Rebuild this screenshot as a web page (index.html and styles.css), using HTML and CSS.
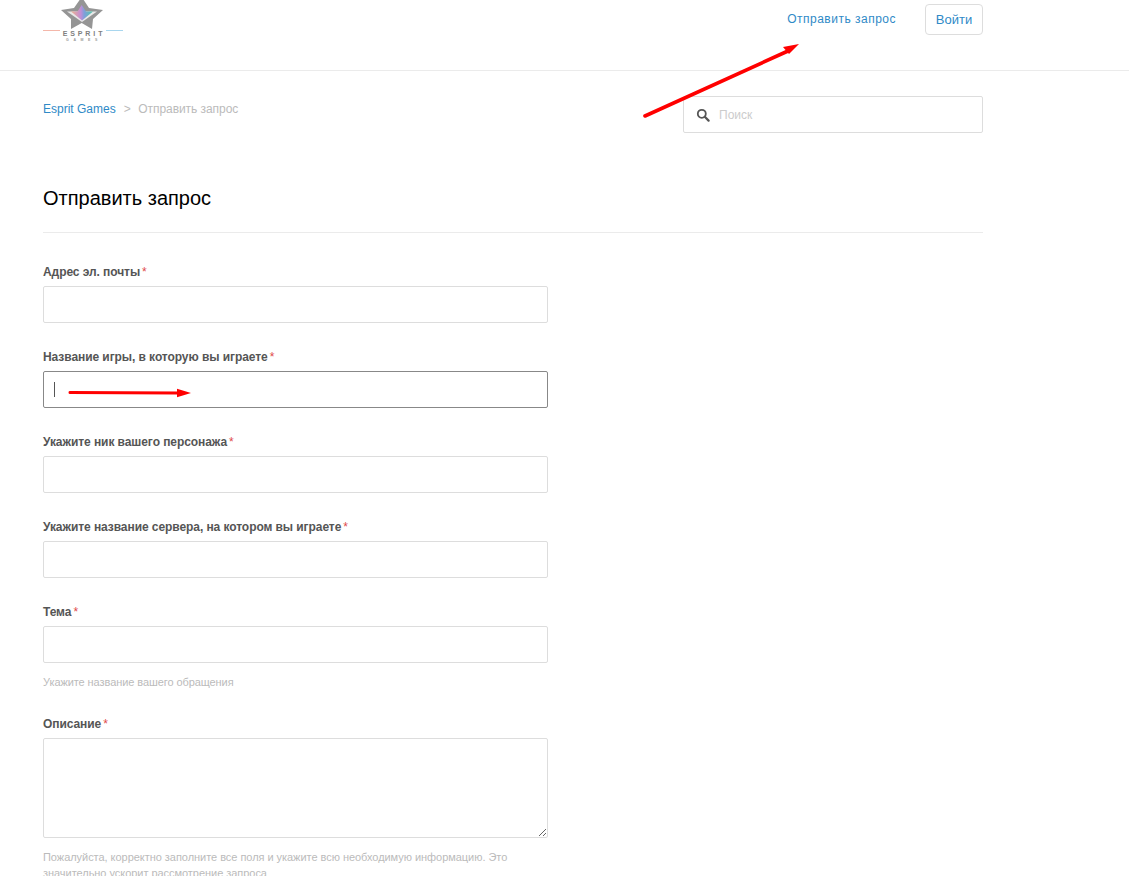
FILE: index.html
```html
<!DOCTYPE html>
<html lang="ru">
<head>
<meta charset="utf-8">
<title>Отправить запрос</title>
<link rel="stylesheet" href="styles.css">
</head>
<body>
<header class="header">
  <div class="header-inner">
    <a class="logo" href="#">
      <svg class="logo-star" width="80" height="42" viewBox="0 0 80 42">
        <defs>
          <linearGradient id="rainbow" x1="0" y1="0" x2="1" y2="0">
            <stop offset="0" stop-color="#f0b08e"/>
            <stop offset="0.45" stop-color="#c08ed6"/>
            <stop offset="0.6" stop-color="#7f9edb"/>
            <stop offset="1" stop-color="#4fc9a8"/>
          </linearGradient>
        </defs>
        <polygon points="38.7,-3 46,8 60,10 50,19 49,29 38.7,23 28,29 28,19 18,10 31,8" fill="#959595"/>
        <polygon points="24,11.5 54,11.5 39,22" fill="#e8e8e8"/>
        <polygon points="38.7,5 43,11.5 50,11.5 39,20.5 28,11.5 34.5,11.5" fill="url(#rainbow)"/>
        <rect x="0" y="30" width="17" height="1" fill="#f4b7aa"/>
        <rect x="63" y="30" width="17" height="1" fill="#a8d6ee"/>
        <text class="logo-word" x="41" y="35.5" text-anchor="middle">ESPRIT</text>
        <text class="logo-sub" x="41" y="41" text-anchor="middle">GAMES</text>
      </svg>
    </a>
    <nav class="nav">
      <a class="nav-link" href="#">Отправить запрос</a>
      <a class="login" href="#">Войти</a>
    </nav>
  </div>
</header>
<main class="page">
  <div class="subnav">
    <ol class="crumbs">
      <li><a href="#">Esprit Games</a></li>
      <li class="sep">&gt;</li>
      <li class="current">Отправить запрос</li>
    </ol>
    <div class="search">
      <svg class="search-icon" width="14" height="14" viewBox="0 0 14 14"><circle cx="5.8" cy="5.8" r="4" fill="none" stroke="#555" stroke-width="1.8"/><line x1="8.8" y1="8.8" x2="12.6" y2="12.6" stroke="#555" stroke-width="2.2" stroke-linecap="round"/></svg>
      <span class="search-text">Поиск</span>
    </div>
  </div>
  <h1 class="title">Отправить запрос</h1>
  <form class="form">
    <div class="field">
      <label class="label">Адрес эл. почты<span class="req">*</span></label>
      <input class="input" type="text">
    </div>
    <div class="field">
      <label class="label">Название игры, в которую вы играете<span class="req">*</span></label>
      <div class="input-wrap">
        <input class="input focused" type="text">
        <span class="caret"></span>
      </div>
    </div>
    <div class="field">
      <label class="label">Укажите ник вашего персонажа<span class="req">*</span></label>
      <input class="input" type="text">
    </div>
    <div class="field">
      <label class="label">Укажите название сервера, на котором вы играете<span class="req">*</span></label>
      <input class="input" type="text">
    </div>
    <div class="field field-hinted">
      <label class="label">Тема<span class="req">*</span></label>
      <input class="input" type="text">
      <p class="hint">Укажите название вашего обращения</p>
    </div>
    <div class="field">
      <label class="label">Описание<span class="req">*</span></label>
      <textarea class="textarea"></textarea>
      <p class="hint hint-long">Пожалуйста, корректно заполните все поля и укажите всю необходимую информацию. Это значительно ускорит рассмотрение запроса</p>
    </div>
  </form>
</main>
<svg class="arrow arrow-top" width="170" height="80" viewBox="0 0 170 80">
  <line x1="3" y1="73" x2="146" y2="8" stroke="#f00" stroke-width="3.6" stroke-linecap="round"/>
  <polygon points="157,1 141,4 147,11" fill="#f00"/>
</svg>
<svg class="arrow arrow-field" width="130" height="16" viewBox="0 0 130 16">
  <line x1="3" y1="7.6" x2="110" y2="8" stroke="#f00" stroke-width="3" stroke-linecap="round"/>
  <polygon points="124,8 110,3.8 110,12.2" fill="#f00"/>
</svg>
</body>
</html>
```
FILE: styles.css
```css
* { box-sizing: border-box; }
html, body { margin: 0; padding: 0; height: 876px; overflow: hidden; background: #fff; }
body { position: relative; font-family: "Liberation Sans", Arial, sans-serif; font-size: 12px; color: #555; }
a { color: #2f8ac7; text-decoration: none; }

.header { height: 71px; border-bottom: 1px solid #ebebeb; padding-left: 43px; }
.header-inner { width: 940px; display: flex; justify-content: space-between; align-items: flex-start; }
.logo { display: block; height: 42px; }
.logo-star { display: block; overflow: hidden; }
.logo-word { font-family: "Liberation Sans", Arial, sans-serif; font-size: 7px; font-weight: 700; letter-spacing: 2.9px; fill: #808080; }
.logo-sub { font-family: "Liberation Sans", Arial, sans-serif; font-size: 3.5px; font-weight: 700; letter-spacing: 4.6px; fill: #999; }
.nav { display: flex; align-items: flex-start; padding-top: 4px; }
.nav-link { font-size: 12px; line-height: 14px; margin-top: 8px; margin-right: 29px; letter-spacing: 0.5px; }
.login { display: block; width: 58px; height: 31px; border: 1px solid #ddd; border-radius: 4px; font-size: 13px; line-height: 29px; text-align: center; }

.page { width: 983px; padding-left: 43px; }
.subnav { display: flex; justify-content: space-between; align-items: flex-start; padding-top: 25px; }
.crumbs { display: flex; list-style: none; margin: 6px 0 0; padding: 0; line-height: 14px; }
.sep { color: #bbb; margin: 0 7.5px 0 8px; }
.current { color: #bbb; letter-spacing: -0.05px; }
.search { width: 300px; height: 37px; border: 1px solid #ddd; border-radius: 2px; display: flex; align-items: center; padding-left: 12px; }
.search-icon { margin-right: 9px; }
.search-text { color: #ccc; font-size: 12px; }

.title { margin: 0; padding: 54px 0 22px; border-bottom: 1px solid #ebebeb; font-size: 20px; line-height: 23px; font-weight: 400; color: #000; }

.form { padding-top: 29px; width: 505px; }
.field { margin-bottom: 24px; }
.field-hinted { margin-bottom: 0; }
.label { display: block; height: 20px; margin-bottom: 4px; font-size: 12px; line-height: 20px; font-weight: 700; color: #555; letter-spacing: -0.07px; }
.req { color: #e04a4a; font-weight: 400; margin-left: 2px; }
.input-wrap { position: relative; }
.input { display: block; width: 100%; height: 37px; border: 1px solid #ddd; border-radius: 2px; background: #fff; outline: none; padding: 0 10px; }
.input.focused { border-color: #888; }
.caret { position: absolute; left: 11px; top: 11px; width: 1px; height: 15px; background: #555; }
.textarea { display: block; width: 100%; height: 100px; border: 1px solid #ddd; border-radius: 2px; background: #fff; outline: none; padding: 10px; }
.hint { margin: 0; color: #bbb; font-size: 11px; line-height: 16px; letter-spacing: -0.08px; }
.field-hinted .hint { padding-top: 11px; height: 51px; }
.hint-long { margin-top: 11px; height: 32px; letter-spacing: -0.04px; }

.arrow { position: absolute; display: block; }
.arrow-top { left: 642px; top: 43px; }
.arrow-field { left: 67px; top: 385px; }
```
